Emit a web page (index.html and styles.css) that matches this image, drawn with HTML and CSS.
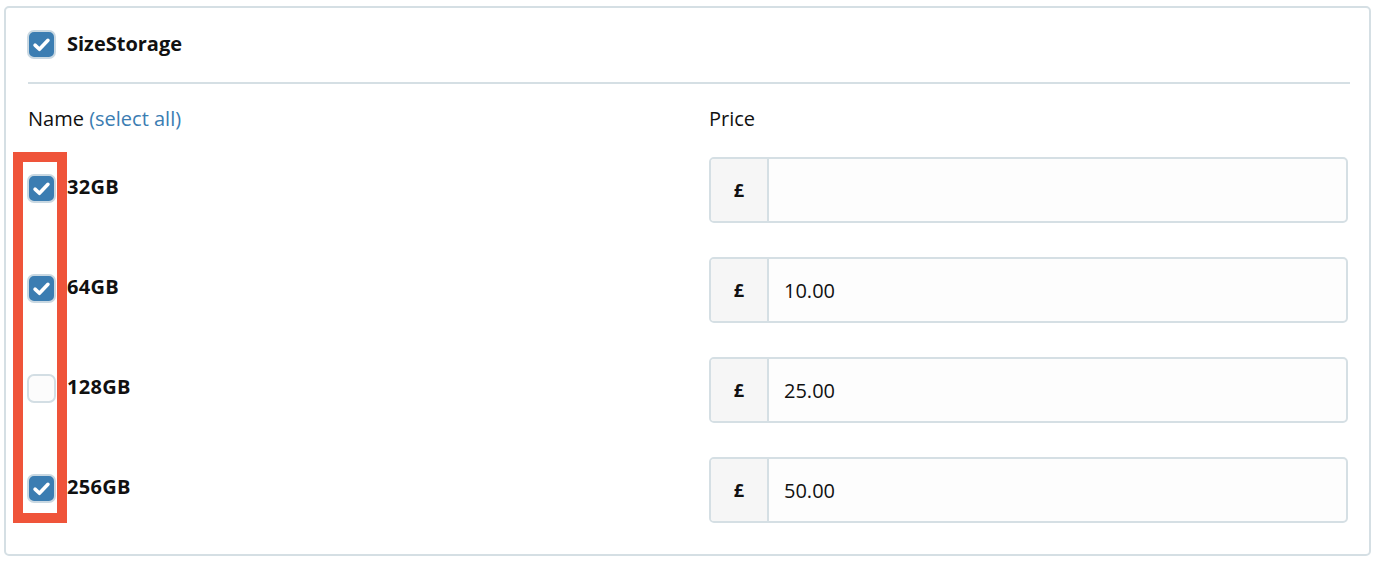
FILE: index.html
```html
<!DOCTYPE html>
<html>
<head>
<meta charset="utf-8">
<link rel="stylesheet" href="styles.css">
</head>
<body>
<div class="card">
  <div class="group-head">
    <span class="cb checked"><svg viewBox="0 0 24 24"><path d="M5.8 12.6l4.2 4 8.2-8.6" fill="none" stroke="#fff" stroke-width="3.4" stroke-linecap="round" stroke-linejoin="round"/></svg></span>
    <span class="group-title">SizeStorage</span>
  </div>
  <div class="divider"></div>
  <div class="grid">
    <div class="col-head">Name <a class="sel">(select all)</a></div>
    <div class="col-head">Price</div>

    <div class="name"><span class="cb checked"><svg viewBox="0 0 24 24"><path d="M5.8 12.6l4.2 4 8.2-8.6" fill="none" stroke="#fff" stroke-width="3.4" stroke-linecap="round" stroke-linejoin="round"/></svg></span><span class="lbl">32GB</span></div>
    <div class="price"><span class="pre">£</span><span class="val"></span></div>

    <div class="name"><span class="cb checked"><svg viewBox="0 0 24 24"><path d="M5.8 12.6l4.2 4 8.2-8.6" fill="none" stroke="#fff" stroke-width="3.4" stroke-linecap="round" stroke-linejoin="round"/></svg></span><span class="lbl">64GB</span></div>
    <div class="price"><span class="pre">£</span><span class="val">10.00</span></div>

    <div class="name"><span class="cb"></span><span class="lbl">128GB</span></div>
    <div class="price"><span class="pre">£</span><span class="val">25.00</span></div>

    <div class="name"><span class="cb checked"><svg viewBox="0 0 24 24"><path d="M5.8 12.6l4.2 4 8.2-8.6" fill="none" stroke="#fff" stroke-width="3.4" stroke-linecap="round" stroke-linejoin="round"/></svg></span><span class="lbl">256GB</span></div>
    <div class="price"><span class="pre">£</span><span class="val">50.00</span></div>
  </div>
  <div class="highlight"></div>
</div>
</body>
</html>
```
FILE: styles.css
```css
* { box-sizing: border-box; }
body {
  margin: 0;
  background: #fff;
  font-family: "Open Sans", "Liberation Sans", sans-serif;
  color: #111;
}
.card {
  position: relative;
  margin: 6px 9px 0 4px;
  height: 550px;
  border: 2px solid #d5dfe4;
  border-radius: 5px;
  padding: 21px 19px 0 21px;
}
.group-head {
  display: flex;
  align-items: center;
  gap: 11px;
  height: 30px;
}
.cb {
  width: 29px;
  height: 29px;
  border-radius: 7px;
  border: 2px solid #d3dee4;
  background: #fcfcfc;
  display: inline-flex;
  align-items: center;
  justify-content: center;
  flex: none;
}
.cb.checked {
  background: #3b7db2;
  border-color: #c9d8e2;
}
.cb svg { width: 25px; height: 25px; }
.group-title {
  font-weight: 700;
  font-size: 20px;
  margin-top: -2px;
}
.divider {
  height: 2px;
  background: #d5dfe4;
  margin: 23px 0 0 1px;
}
.grid {
  display: grid;
  grid-template-columns: 681px 639px;
  row-gap: 34px;
  margin-left: 1px;
}
.col-head {
  font-size: 20px;
  margin-top: 22px;
  margin-bottom: -9px;
  line-height: 26px;
}
.sel { color: #3b7db2; }
.name {
  display: flex;
  align-items: center;
  gap: 11px;
  margin-left: -1px;
  padding-top: 17px;
  align-self: start;
}
.lbl {
  font-weight: 700;
  font-size: 20px;
  margin-top: -4px;
  letter-spacing: 0.3px;
}
.price {
  display: flex;
  height: 66px;
  border: 2px solid #d5dfe4;
  border-radius: 5px;
  overflow: hidden;
  background: #fdfdfd;
}
.pre {
  width: 58px;
  background: #f6f6f6;
  border-right: 2px solid #d5dfe4;
  display: flex;
  align-items: center;
  justify-content: center;
  font-weight: 700;
  font-size: 18px;
}
.val {
  display: flex;
  align-items: center;
  padding-left: 15px;
  font-size: 20px;
}
.highlight {
  position: absolute;
  left: 7px;
  top: 144px;
  width: 54px;
  height: 371px;
  border: 10px solid #ef543a;
}
```
